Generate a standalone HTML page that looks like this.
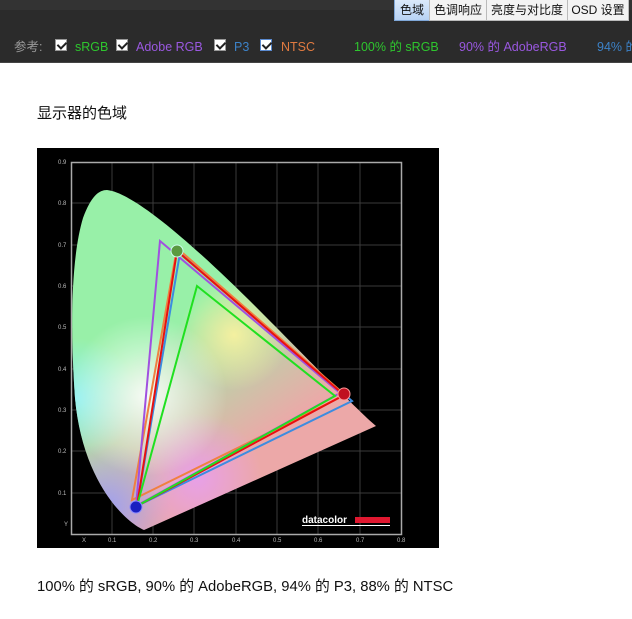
<!DOCTYPE html>
<html><head><meta charset="utf-8"><style>
*{margin:0;padding:0;box-sizing:border-box}
body{width:632px;height:619px;background:#fff;font-family:"Liberation Sans","Noto Sans CJK SC",sans-serif;position:relative;overflow:hidden}
#hdr{position:absolute;left:0;top:0;width:632px;height:63px;background:#2b2b2b;border-bottom:1px solid #444}
#top{position:absolute;left:0;top:0;width:632px;height:10px;background:#333}
.tab{position:absolute;top:0;height:21px;background:#f3f3f3;border:1px solid #bbb;border-top:none;font-size:12px;line-height:20px;text-align:center;color:#111}
.t{position:absolute;top:39px;font-size:12.5px;line-height:16px;white-space:nowrap}
.cb{position:absolute;top:39px;width:12px;height:12px;background:#fff;border:1px solid #999}
.cb::after{content:"";position:absolute;left:3px;top:0px;width:4px;height:7px;border:solid #222;border-width:0 2px 2px 0;transform:rotate(45deg)}
</style></head><body>
<div id="hdr"><div id="top"></div></div>
<div class="tab" style="left:394px;width:36px;background:linear-gradient(#dbe9fb,#b7d2f4);border-color:#7fa7d8">色域</div>
<div class="tab" style="left:429px;width:58px">色调响应</div>
<div class="tab" style="left:486px;width:82px">亮度与对比度</div>
<div class="tab" style="left:567px;width:62px">OSD 设置</div>
<div class="t" style="left:14px;color:#999">参考:</div>
<div class="cb" style="left:55px"></div><div class="t" style="left:75px;color:#2ec62e">sRGB</div>
<div class="cb" style="left:116px"></div><div class="t" style="left:136px;color:#9a58e0">Adobe RGB</div>
<div class="cb" style="left:214px"></div><div class="t" style="left:234px;color:#3c82c8">P3</div>
<div class="cb" style="left:260px;border-color:#5a8ad0"></div><div class="t" style="left:281px;color:#e07a40">NTSC</div>
<div class="t" style="left:354px;color:#2ec62e">100% 的 sRGB</div>
<div class="t" style="left:459px;color:#9a58e0">90% 的 AdobeRGB</div>
<div class="t" style="left:597px;color:#3c82c8">94% 的</div>
<div style="position:absolute;left:37px;top:102px;font-size:15px;color:#111">显示器的色域</div>
<svg style="position:absolute;left:37px;top:148px" width="402" height="400" viewBox="0 0 402 400">
<defs>
<clipPath id="hs"><path d="M107,382 C85,372 45,330 38,250 C33,180 34,110 46,70 C54,48 62,42 70,42 C100,45 170,110 220,160 C270,210 320,262 339,278 Z"/></clipPath>
<linearGradient id="base" x1="150" y1="170" x2="230" y2="290" gradientUnits="userSpaceOnUse"><stop offset="0" stop-color="#98f0a8"/><stop offset="1" stop-color="#eca8a8"/></linearGradient>
<radialGradient id="g1" cx="110" cy="248" r="80" gradientUnits="userSpaceOnUse"><stop offset="0" stop-color="#fff" stop-opacity="0.9"/><stop offset="1" stop-color="#fff" stop-opacity="0"/></radialGradient>
<radialGradient id="gy" cx="197" cy="187" r="55" gradientUnits="userSpaceOnUse"><stop offset="0" stop-color="#f4f0a0"/><stop offset="1" stop-color="#f4f0a0" stop-opacity="0"/></radialGradient>
<radialGradient id="gp" cx="160" cy="330" r="65" gradientUnits="userSpaceOnUse"><stop offset="0" stop-color="#e8a0e8"/><stop offset="1" stop-color="#e8a0e8" stop-opacity="0"/></radialGradient>
<radialGradient id="gc" cx="40" cy="250" r="60" gradientUnits="userSpaceOnUse"><stop offset="0" stop-color="#90f0f0"/><stop offset="1" stop-color="#90f0f0" stop-opacity="0"/></radialGradient>
<radialGradient id="gb" cx="70" cy="360" r="65" gradientUnits="userSpaceOnUse"><stop offset="0" stop-color="#9fa0f0"/><stop offset="1" stop-color="#9fa0f0" stop-opacity="0"/></radialGradient>
</defs>
<rect width="402" height="400" fill="#000"/>
<g stroke="#3a3a3a" stroke-width="1">
<path d="M75,14V386M116,14V386M157,14V386M199,14V386M240,14V386M281,14V386M323,14V386"/>
<path d="M34,55H364M34,97H364M34,138H364M34,179H364M34,221H364M34,262H364M34,303H364M34,345H364"/>
</g>
<rect x="34.5" y="14.5" width="330" height="372" fill="none" stroke="#aaa" stroke-width="1.5"/>
<g font-size="6" fill="#bbb" font-family="Liberation Sans,sans-serif">
<text x="21" y="16">0.9</text><text x="21" y="57">0.8</text><text x="21" y="99">0.7</text><text x="21" y="140">0.6</text><text x="21" y="181">0.5</text><text x="21" y="223">0.4</text><text x="21" y="264">0.3</text><text x="21" y="305">0.2</text><text x="21" y="347">0.1</text><text x="27" y="378">Y</text>
<text x="45" y="394">X</text><text x="71" y="394">0.1</text><text x="112" y="394">0.2</text><text x="153" y="394">0.3</text><text x="195" y="394">0.4</text><text x="236" y="394">0.5</text><text x="277" y="394">0.6</text><text x="319" y="394">0.7</text><text x="360" y="394">0.8</text>
</g>
<g clip-path="url(#hs)">
<rect width="402" height="400" fill="url(#base)"/>
<rect width="402" height="400" fill="url(#gc)"/>
<rect width="402" height="400" fill="url(#gb)"/>
<rect width="402" height="400" fill="url(#gp)"/>
<rect width="402" height="400" fill="url(#gy)"/>
<rect width="402" height="400" fill="url(#g1)"/>
</g>
<g fill="none" stroke-width="2">
<polygon points="143,105 315,253 100,358" stroke="#3c8ce0"/>
<polygon points="140,100 308,247 95,352" stroke="#f08040"/>
<polygon points="123,93 303,245 99,358" stroke="#a050e0"/>
<polygon points="140,103 307,247 100,358" stroke="#e81010"/>
<polygon points="160,138 298,248 100,358" stroke="#20e020"/>
</g>
<circle cx="140" cy="103" r="6" fill="#5a9a40" stroke="#cfe" stroke-width="1"/>
<circle cx="307" cy="246" r="6" fill="#c01020" stroke="#f99" stroke-width="1"/>
<circle cx="99" cy="359" r="6" fill="#1a20c0" stroke="#88f" stroke-width="1"/>
<text x="265" y="375" font-size="10" font-weight="bold" fill="#fff" font-family="Liberation Sans,sans-serif">datacolor</text>
<rect x="318" y="369" width="35" height="6" fill="#e01830"/>
<rect x="265" y="377" width="88" height="1" fill="#fff"/>
</svg>
<div style="position:absolute;left:37px;top:575px;font-size:14.8px;color:#111">100% 的 sRGB, 90% 的 AdobeRGB, 94% 的 P3, 88% 的 NTSC</div>
</body></html>
